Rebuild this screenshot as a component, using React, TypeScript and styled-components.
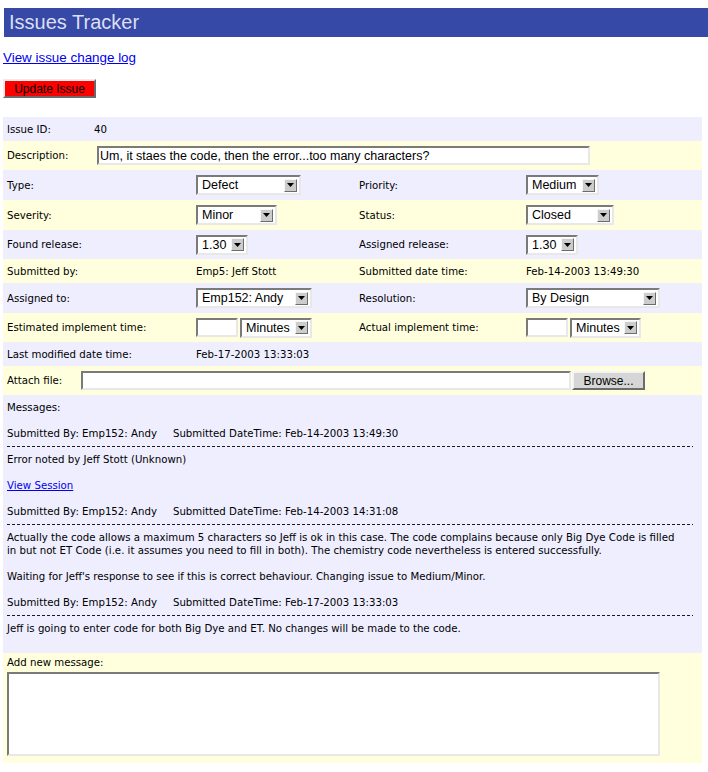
import React from 'react';
import styled, { createGlobalStyle } from 'styled-components';

const GlobalStyle = createGlobalStyle`
  html, body { margin: 0; padding: 0; background: #ffffff; }
  body {
    font-family: "DejaVu Sans", Verdana, sans-serif;
    font-size: 10.2px;
    color: #000;
  }
`;

const Page = styled.div`
  box-sizing: border-box;
  width: 708px;
  padding: 8px 0 0 3px;
`;

const Header = styled.div`
  margin-left: 1px;
  height: 29px;
  padding-left: 5px;
  background: #3649a6;
  color: #dcdff0;
  font-family: "Liberation Sans", Arial, sans-serif;
  font-size: 20px;
  line-height: 29px;
`;

const LinkLine = styled.div`
  margin-top: 13px;
  font-family: "Liberation Sans", Arial, sans-serif;
  font-size: 13.4px;
  line-height: 16px;
`;

const BlueLink = styled.a`
  color: #0000ee;
  text-decoration: underline;
  cursor: pointer;
`;

const UpdateButton = styled.button`
  display: block;
  box-sizing: border-box;
  margin-top: 13px;
  width: 93px;
  height: 19px;
  padding: 0;
  background: #ff0000;
  border: 2px solid;
  border-color: #ececec #6a6a6a #6a6a6a #ececec;
  font-family: "Liberation Sans", Arial, sans-serif;
  font-size: 12px;
  color: #000;
`;

const Table = styled.div`
  margin-top: 19px;
  width: 699px;
`;

const Row = styled.div<{ $tone: 'lav' | 'yel'; $h: number }>`
  display: grid;
  align-items: center;
  height: ${(p) => p.$h}px;
  background: ${(p) => (p.$tone === 'lav' ? '#eeeeff' : '#ffffdd')};
`;

const FourRow = styled(Row)`
  grid-template-columns: 189px 163px 167px 1fr;
`;

const PairRow = styled(Row)`
  grid-template-columns: 87px 1fr;
`;

const AttachRow = styled(Row)`
  grid-template-columns: 74px 1fr;
`;

const Cell = styled.div`
  display: flex;
  align-items: center;
  padding-left: 4px;
  white-space: nowrap;
`;

const inset = `
  box-sizing: border-box;
  background: #ffffff;
  border: 2px solid;
  border-color: #7a7a7a #e8e8e8 #e8e8e8 #7a7a7a;
`;

const SelectBox = styled.div<{ $w: number }>`
  ${inset}
  display: inline-flex;
  align-items: center;
  justify-content: space-between;
  width: ${(p) => p.$w}px;
  height: 20px;
  padding: 0 2px 0 4px;
  font-family: "Liberation Sans", Arial, sans-serif;
  font-size: 12.5px;
  line-height: 16px;
`;

const ArrowBtn = styled.span`
  box-sizing: border-box;
  display: flex;
  align-items: center;
  justify-content: center;
  width: 13px;
  height: 13px;
  background: #cccccc;
  border: 1px solid;
  border-color: #f6f6f6 #6c6c6c #6c6c6c #f6f6f6;
`;

const TextInput = styled.input<{ $w: number; $ml?: number }>`
  ${inset}
  width: ${(p) => p.$w}px;
  height: 19px;
  margin: 0 0 0 ${(p) => p.$ml ?? 0}px;
  padding: 0 1px;
  font-family: "Liberation Sans", Arial, sans-serif;
  font-size: 12.5px;
  color: #000;
  outline: none;
`;

const Pair = styled.div`
  display: flex;
  align-items: center;
  gap: 2px;
`;

const GrayButton = styled.button`
  box-sizing: border-box;
  width: 73px;
  height: 19px;
  margin-left: 1px;
  padding: 0;
  background: #d6d6d6;
  border: 2px solid;
  border-color: #f4f4f4 #6c6c6c #6c6c6c #f4f4f4;
  font-family: "Liberation Sans", Arial, sans-serif;
  font-size: 12px;
  color: #000;
`;

const MessagesRow = styled.div`
  background: #eeeeff;
  padding: 6px 17px 18px 4px;
  line-height: 13px;
`;

const Line = styled.div<{ $gap?: boolean }>`
  margin-top: ${(p) => (p.$gap ? 13 : 0)}px;
`;

const Later = styled.span`
  margin-left: 16px;
`;

const Dashes = styled.div`
  height: 13px;
  margin-right: -8px;
  background: repeating-linear-gradient(to right, #1a1a1a 0 3px, transparent 3px 5px) 0 6px / 100% 1px no-repeat;
`;

const NewMessageRow = styled.div`
  background: #ffffdd;
  padding: 4px 0 7px 4px;
`;

const NewLabel = styled.div`
  line-height: 12px;
`;

const MessageArea = styled.textarea`
  ${inset}
  display: block;
  width: 653px;
  height: 84px;
  margin-top: 3px;
  resize: none;
  outline: none;
`;

function Select({ w, value }: { w: number; value: string }) {
  return (
    <SelectBox $w={w}>
      <span>{value}</span>
      <ArrowBtn>
        <svg width="7" height="4" viewBox="0 0 7 4">
          <polygon points="0,0 7,0 3.5,4" fill="#000" />
        </svg>
      </ArrowBtn>
    </SelectBox>
  );
}

const messages = [
  {
    by: 'Emp152: Andy',
    at: 'Feb-14-2003 13:49:30',
    body: [<>Error noted by Jeff Stott (Unknown)</>, <BlueLink>View Session</BlueLink>],
  },
  {
    by: 'Emp152: Andy',
    at: 'Feb-14-2003 14:31:08',
    body: [
      <>
        Actually the code allows a maximum 5 characters so Jeff is ok in this case. The code complains because only Big
        Dye Code is filled in but not ET Code (i.e. it assumes you need to fill in both). The chemistry code nevertheless
        is entered successfully.
      </>,
      <>Waiting for Jeff's response to see if this is correct behaviour. Changing issue to Medium/Minor.</>,
    ],
  },
  {
    by: 'Emp152: Andy',
    at: 'Feb-17-2003 13:33:03',
    body: [<>Jeff is going to enter code for both Big Dye and ET. No changes will be made to the code.</>],
  },
];

export default function App() {
  return (
    <Page>
      <GlobalStyle />
      <Header>Issues Tracker</Header>
      <LinkLine>
        <BlueLink>View issue change log</BlueLink>
      </LinkLine>
      <UpdateButton>Update Issue</UpdateButton>
      <Table>
        <PairRow $tone="lav" $h={24}>
          <Cell>Issue ID:</Cell>
          <Cell>40</Cell>
        </PairRow>
        <PairRow $tone="yel" $h={29}>
          <Cell>Description:</Cell>
          <Cell>
            <TextInput $w={493} $ml={3} defaultValue="Um, it staes the code, then the error...too many characters?" />
          </Cell>
        </PairRow>
        <FourRow $tone="lav" $h={30}>
          <Cell>Type:</Cell>
          <Cell>
            <Select w={105} value="Defect" />
          </Cell>
          <Cell>Priority:</Cell>
          <Cell>
            <Select w={73} value="Medium" />
          </Cell>
        </FourRow>
        <FourRow $tone="yel" $h={30}>
          <Cell>Severity:</Cell>
          <Cell>
            <Select w={81} value="Minor" />
          </Cell>
          <Cell>Status:</Cell>
          <Cell>
            <Select w={88} value="Closed" />
          </Cell>
        </FourRow>
        <FourRow $tone="lav" $h={29}>
          <Cell>Found release:</Cell>
          <Cell>
            <Select w={52} value="1.30" />
          </Cell>
          <Cell>Assigned release:</Cell>
          <Cell>
            <Select w={52} value="1.30" />
          </Cell>
        </FourRow>
        <FourRow $tone="yel" $h={24}>
          <Cell>Submitted by:</Cell>
          <Cell>Emp5: Jeff Stott</Cell>
          <Cell>Submitted date time:</Cell>
          <Cell>Feb-14-2003 13:49:30</Cell>
        </FourRow>
        <FourRow $tone="lav" $h={30}>
          <Cell>Assigned to:</Cell>
          <Cell>
            <Select w={116} value="Emp152: Andy" />
          </Cell>
          <Cell>Resolution:</Cell>
          <Cell>
            <Select w={134} value="By Design" />
          </Cell>
        </FourRow>
        <FourRow $tone="yel" $h={29}>
          <Cell>Estimated implement time:</Cell>
          <Cell>
            <Pair>
              <TextInput $w={42} />
              <Select w={72} value="Minutes" />
            </Pair>
          </Cell>
          <Cell>Actual implement time:</Cell>
          <Cell>
            <Pair>
              <TextInput $w={42} />
              <Select w={71} value="Minutes" />
            </Pair>
          </Cell>
        </FourRow>
        <FourRow $tone="lav" $h={24}>
          <Cell>Last modified date time:</Cell>
          <Cell>Feb-17-2003 13:33:03</Cell>
          <Cell />
          <Cell />
        </FourRow>
        <AttachRow $tone="yel" $h={29}>
          <Cell>Attach file:</Cell>
          <Cell>
            <TextInput $w={490} />
            <GrayButton>Browse...</GrayButton>
          </Cell>
        </AttachRow>
        <MessagesRow>
          <Line>Messages:</Line>
          {messages.map((m, i) => (
            <React.Fragment key={i}>
              <Line $gap>
                Submitted By: {m.by}
                <Later>Submitted DateTime: {m.at}</Later>
              </Line>
              <Dashes />
              {m.body.map((b, j) => (
                <Line key={j} $gap={j > 0}>
                  {b}
                </Line>
              ))}
            </React.Fragment>
          ))}
        </MessagesRow>
        <NewMessageRow>
          <NewLabel>Add new message:</NewLabel>
          <MessageArea />
        </NewMessageRow>
      </Table>
    </Page>
  );
}
